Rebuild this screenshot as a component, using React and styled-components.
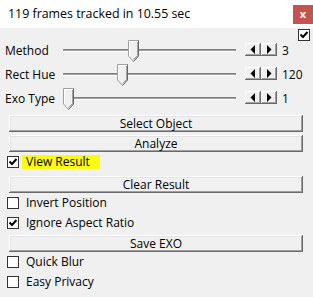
import React from 'react'
import styled, { createGlobalStyle } from 'styled-components'

const GlobalStyle = createGlobalStyle`
    html, body {
        margin: 0;
        padding: 0;
        background: #f0f0f0;
    }
    body {
        font-family: "Open Sans", "Noto Sans", sans-serif;
        font-size: 12px;
        color: #000;
    }
`

const sliders = [
    { label: 'Method', value: 3, pos: 0.4 },
    { label: 'Rect Hue', value: 120, pos: 1 / 3 },
    { label: 'Exo Type', value: 1, pos: 0 },
]

const CheckMark = () => (
    <svg width="10" height="10" viewBox="0 0 10 10">
        <polyline points="1.5,4.5 4,7 8.5,2" fill="none" stroke="#000" strokeWidth="2" />
    </svg>
)

const Check = ({ checked }) => (
    <CheckBox>{checked && <CheckMark />}</CheckBox>
)

const Thumb = () => (
    <svg width="11" height="22" viewBox="0 0 11 22">
        <polygon points="0.5,0.5 10.5,0.5 10.5,16 5.5,21.5 0.5,16" fill="#f0f0f0" stroke="#a0a0a0" />
        <polyline points="1.5,16 1.5,1.5 9.5,1.5" fill="none" stroke="#fff" />
        <polyline points="10.5,0.5 10.5,16 5.5,21.5" fill="none" stroke="#696969" />
        <polyline points="9.5,2 9.5,15.5 5.5,19.5" fill="none" stroke="#a0a0a0" />
    </svg>
)

const Arrow = ({ dir }) => (
    <svg width="6" height="9" viewBox="0 0 6 9">
        {dir === 'left'
            ? <polygon points="5,0 5,9 0.5,4.5" fill="#000" />
            : <polygon points="1,0 1,9 5.5,4.5" fill="#000" />}
    </svg>
)

const SliderRow = ({ label, value, pos }) => (
    <Row>
        <RowLabel>{label}</RowLabel>
        <Track>
            <Channel />
            <ThumbHolder style={{ left: `${pos * 162}px` }}>
                <Thumb />
            </ThumbHolder>
        </Track>
        <Spin>
            <SpinButton><Arrow dir="left" /></SpinButton>
            <SpinButton><Arrow dir="right" /></SpinButton>
        </Spin>
        <Value>{value}</Value>
    </Row>
)

const CheckRow = ({ label, checked, highlight }) => (
    <CheckLine>
        <Check checked={checked} />
        <CheckLabel $highlight={highlight}>{label}</CheckLabel>
    </CheckLine>
)

const App = () => {
    return (
        <Window>
            <GlobalStyle />
            <TitleBar>
                <Title>119 frames tracked in 10.55 sec</Title>
                <CloseButton>x</CloseButton>
            </TitleBar>
            <Body>
                <TopCheck>
                    <Check checked />
                </TopCheck>
                {sliders.map((s) => (
                    <SliderRow key={s.label} {...s} />
                ))}
                <Button $mt={5}>Select Object</Button>
                <Button $mt={3}>Analyze</Button>
                <CheckRow label="View Result" checked highlight />
                <Button $mt={4}>Clear Result</Button>
                <CheckRow label="Invert Position" />
                <CheckRow label="Ignore Aspect Ratio" checked />
                <Button $mt={2}>Save EXO</Button>
                <CheckRow label="Quick Blur" />
                <CheckRow label="Easy Privacy" />
            </Body>
        </Window>
    )
}

export default App

const Window = styled.div`
    width: 313px;
    height: 297px;
    background: #f0f0f0;
    overflow: hidden;
`

const TitleBar = styled.div`
    height: 28px;
    background: #fff;
    display: flex;
    align-items: center;
    justify-content: space-between;
    padding-left: 8px;
`

const Title = styled.div`
    font-size: 12.4px;
    margin-top: -1px;
`

const CloseButton = styled.div`
    width: 20px;
    height: 19px;
    background: #c75050;
    color: #fff;
    font-weight: bold;
    font-size: 11px;
    display: flex;
    align-items: center;
    justify-content: center;
    line-height: 1;
    padding-bottom: 1px;
    box-sizing: border-box;
`

const Body = styled.div`
    display: flex;
    flex-direction: column;
`

const TopCheck = styled.div`
    height: 9px;
    display: flex;
    justify-content: flex-end;
    padding: 1px 3px 0 0;
    position: relative;
    z-index: 1;
`

const CheckBox = styled.div`
    width: 12px;
    height: 12px;
    box-sizing: border-box;
    border: 1px solid #333;
    background: #fff;
    display: flex;
    align-items: center;
    justify-content: center;
    flex-shrink: 0;
`

const Row = styled.div`
    height: 24px;
    display: grid;
    grid-template-columns: 58px 173px 46px auto;
    align-items: center;
    padding-left: 5px;
`

const RowLabel = styled.div`
    font-size: 12px;
`

const Track = styled.div`
    position: relative;
    height: 24px;
    display: flex;
    align-items: center;
`

const Channel = styled.div`
    width: 100%;
    height: 3px;
    background: #a0a0a0;
    border-top: 1px solid #808080;
    border-bottom: 1px solid #fff;
    box-sizing: border-box;
`

const ThumbHolder = styled.div`
    position: absolute;
    top: 2px;
    height: 22px;
`

const Spin = styled.div`
    display: flex;
    margin-left: 9px;
    margin-top: -1px;
`

const SpinButton = styled.div`
    width: 16px;
    height: 13px;
    box-sizing: border-box;
    background: #f0f0f0;
    box-shadow: inset -1px -1px #696969, inset 1px 1px #fff, inset -2px -2px #a0a0a0;
    display: flex;
    align-items: center;
    justify-content: center;
`

const Value = styled.div`
    font-size: 12px;
`

const Button = styled.div`
    margin: ${({ $mt }) => $mt}px 10px 0 9px;
    height: 17px;
    box-sizing: border-box;
    background: #f0f0f0;
    box-shadow: inset -1px -1px #696969, inset 1px 1px #fff, inset -2px -2px #a0a0a0, inset 2px 2px #e3e3e3;
    display: flex;
    align-items: center;
    justify-content: center;
    font-size: 12px;
    line-height: 1;
`

const CheckLine = styled.div`
    height: 20px;
    display: flex;
    align-items: center;
    padding-left: 7px;
    gap: 3px;
`

const CheckLabel = styled.div`
    font-size: 12px;
    height: 14px;
    line-height: 14px;
    padding: 0 ${({ $highlight }) => ($highlight ? '10px' : '4px')} 0 4px;
    background: ${({ $highlight }) => ($highlight ? '#fafa14' : 'transparent')};
`
